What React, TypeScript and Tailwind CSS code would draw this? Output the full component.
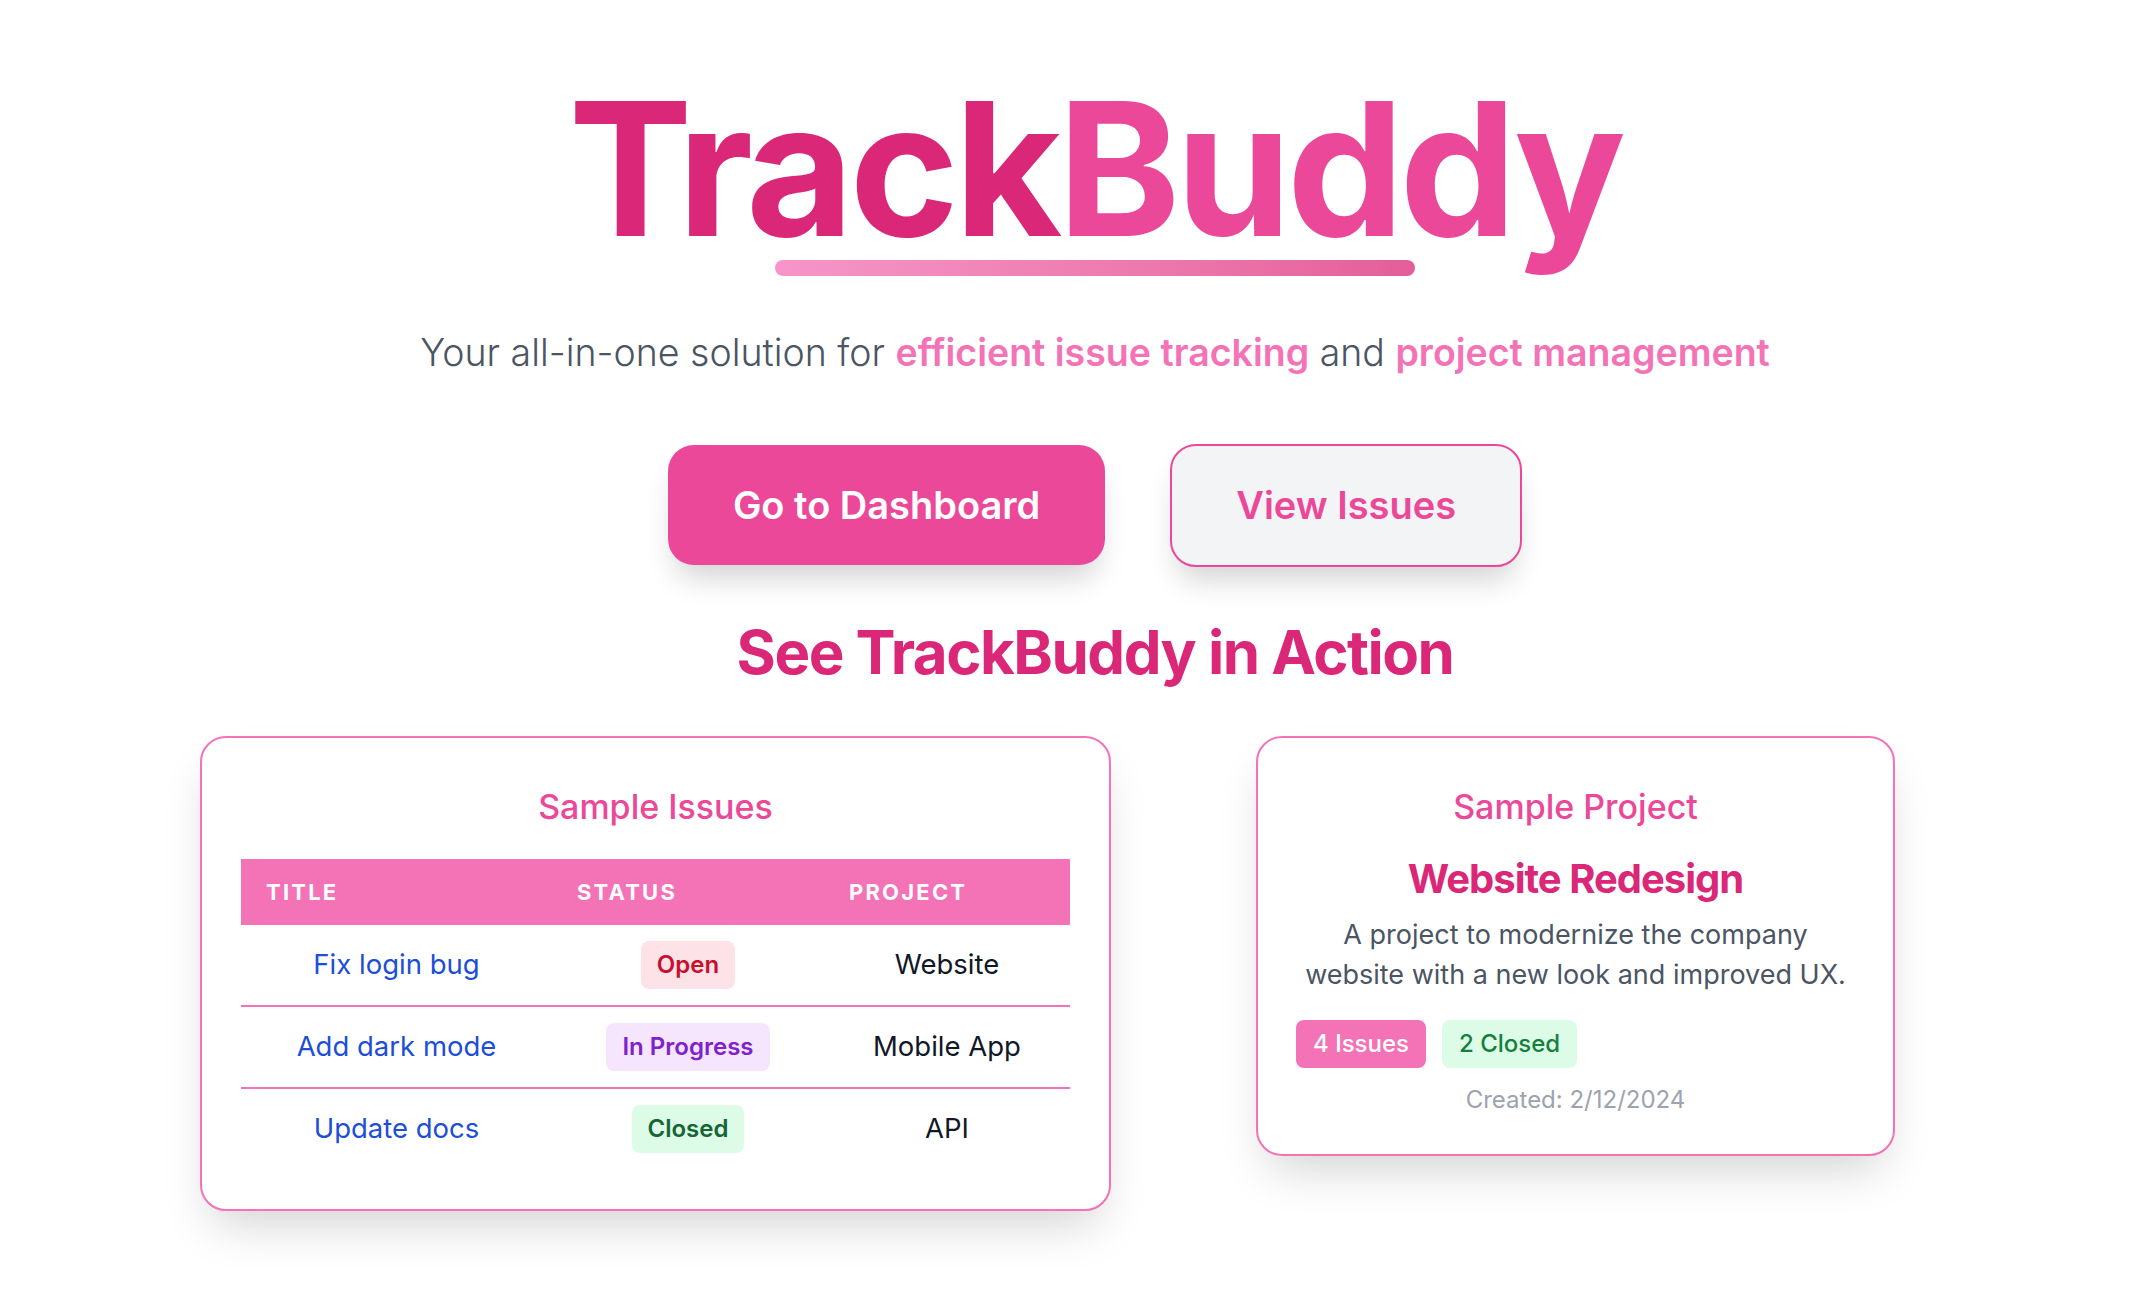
import React from 'react'

type Issue = {
  title: string
  status: 'Open' | 'In Progress' | 'Closed'
  project: string
}

const issues: Issue[] = [
  { title: 'Fix login bug', status: 'Open', project: 'Website' },
  { title: 'Add dark mode', status: 'In Progress', project: 'Mobile App' },
  { title: 'Update docs', status: 'Closed', project: 'API' },
]

const statusClass: Record<Issue['status'], string> = {
  Open: 'bg-[#fde3e8] text-[#c8102e]',
  'In Progress': 'bg-[#f5e6fe] text-[#7e22ce]',
  Closed: 'bg-[#dcfce7] text-[#166534]',
}

function IssuesCard() {
  return (
    <div className="w-[911px] shrink-0 rounded-[26px] border-2 border-[#f472b6] bg-white px-[39px] pt-[52px] pb-[40px] shadow-[0_24px_48px_-12px_rgba(0,0,0,0.18)]">
      <h3 className="text-center text-[34px] leading-none font-medium text-[#ec4899]">Sample Issues</h3>
      <div className="mt-[35px]">
        <div className="grid h-[66px] grid-cols-[311px_272px_246px] items-center bg-[#f472b6] text-[22px] leading-none font-bold tracking-widest text-white">
          <div className="pl-[25px]">TITLE</div>
          <div className="pl-[25px]">STATUS</div>
          <div className="pl-[25px]">PROJECT</div>
        </div>
        {issues.map((issue, i) => (
          <div
            key={issue.title}
            className={
              i < issues.length - 1
                ? 'grid h-[82px] grid-cols-[311px_272px_246px] items-center border-b-2 border-[#f472b6] text-center'
                : 'grid h-[80px] grid-cols-[311px_272px_246px] items-center text-center'
            }
          >
            <div className="text-[27.5px] text-[#1d4ed8]">{issue.title}</div>
            <div className="flex justify-center">
              <span className={`rounded-lg px-4 py-1.5 text-[24px] leading-[36px] font-semibold ${statusClass[issue.status]}`}>
                {issue.status}
              </span>
            </div>
            <div className="text-[27.5px] text-[#111827]">{issue.project}</div>
          </div>
        ))}
      </div>
    </div>
  )
}

function ProjectCard() {
  return (
    <div className="w-[639px] shrink-0 rounded-[26px] border-2 border-[#f472b6] bg-white px-[38px] pt-[52px] pb-[42px] text-center shadow-[0_24px_48px_-12px_rgba(0,0,0,0.18)]">
      <h3 className="text-[34px] leading-none font-medium text-[#ec4899]">Sample Project</h3>
      <h4 className="mt-[35px] text-[40px] leading-none font-bold tracking-tight text-[#db2777]">Website Redesign</h4>
      <p className="mt-[16px] text-[27px] leading-[40px] text-[#4b5563]">
        A project to modernize the company website with a new look and improved UX.
      </p>
      <div className="mt-[25px] flex gap-4">
        <span className="rounded-lg bg-[#f472b6] px-[17px] py-1.5 text-[24px] leading-[36px] font-medium text-white">4 Issues</span>
        <span className="rounded-lg bg-[#dcfce7] px-[17px] py-1.5 text-[24px] leading-[36px] font-medium text-[#15803d]">2 Closed</span>
      </div>
      <p className="mt-[20px] text-[24px] leading-none text-[#9ca3af]">Created: 2/12/2024</p>
    </div>
  )
}

export default function App() {
  return (
    <div className="min-h-screen bg-white pb-20 font-['Inter','Noto_Sans',sans-serif]">
      <div className="flex flex-col items-center pl-[42px] pt-[76px]">
        <h1 className="text-[186px] leading-none font-bold tracking-tight">
          <span className="text-[#db2777]">Track</span>
          <span className="text-[#ec4899]">Buddy</span>
        </h1>
        <div className="mt-[-2px] h-4 w-[640px] rounded-full bg-linear-to-r from-[#f472b6] to-[#db2777] opacity-75" />

        <p className="mt-[58px] text-[37.5px] leading-none font-light text-[#4b5563]">
          Your all-in-one solution for{' '}
          <span className="font-semibold text-[#f472b6]">efficient issue tracking</span> and{' '}
          <span className="font-semibold text-[#f472b6]">project management</span>
        </p>

        <div className="mt-[72px] flex items-center gap-[65px]">
          <button className="flex h-[120px] items-center rounded-[26px] bg-[#ec4899] px-[65px] text-[38px] leading-none font-semibold text-white shadow-[0_20px_30px_-8px_rgba(0,0,0,0.18)]">
            Go to Dashboard
          </button>
          <button className="flex h-[123px] items-center rounded-[26px] border-2 border-[#ec4899] bg-[#f3f4f6] px-[64px] text-[38px] leading-none font-semibold text-[#ec4899] shadow-[0_20px_30px_-8px_rgba(0,0,0,0.18)]">
            View Issues
          </button>
        </div>

        <h2 className="mt-[55px] text-[60px] leading-none font-bold tracking-tight text-[#db2777]">See TrackBuddy in Action</h2>
      </div>

      <div className="mt-[54px] flex items-start gap-[145px] pl-[200px]">
        <IssuesCard />
        <ProjectCard />
      </div>
    </div>
  )
}
